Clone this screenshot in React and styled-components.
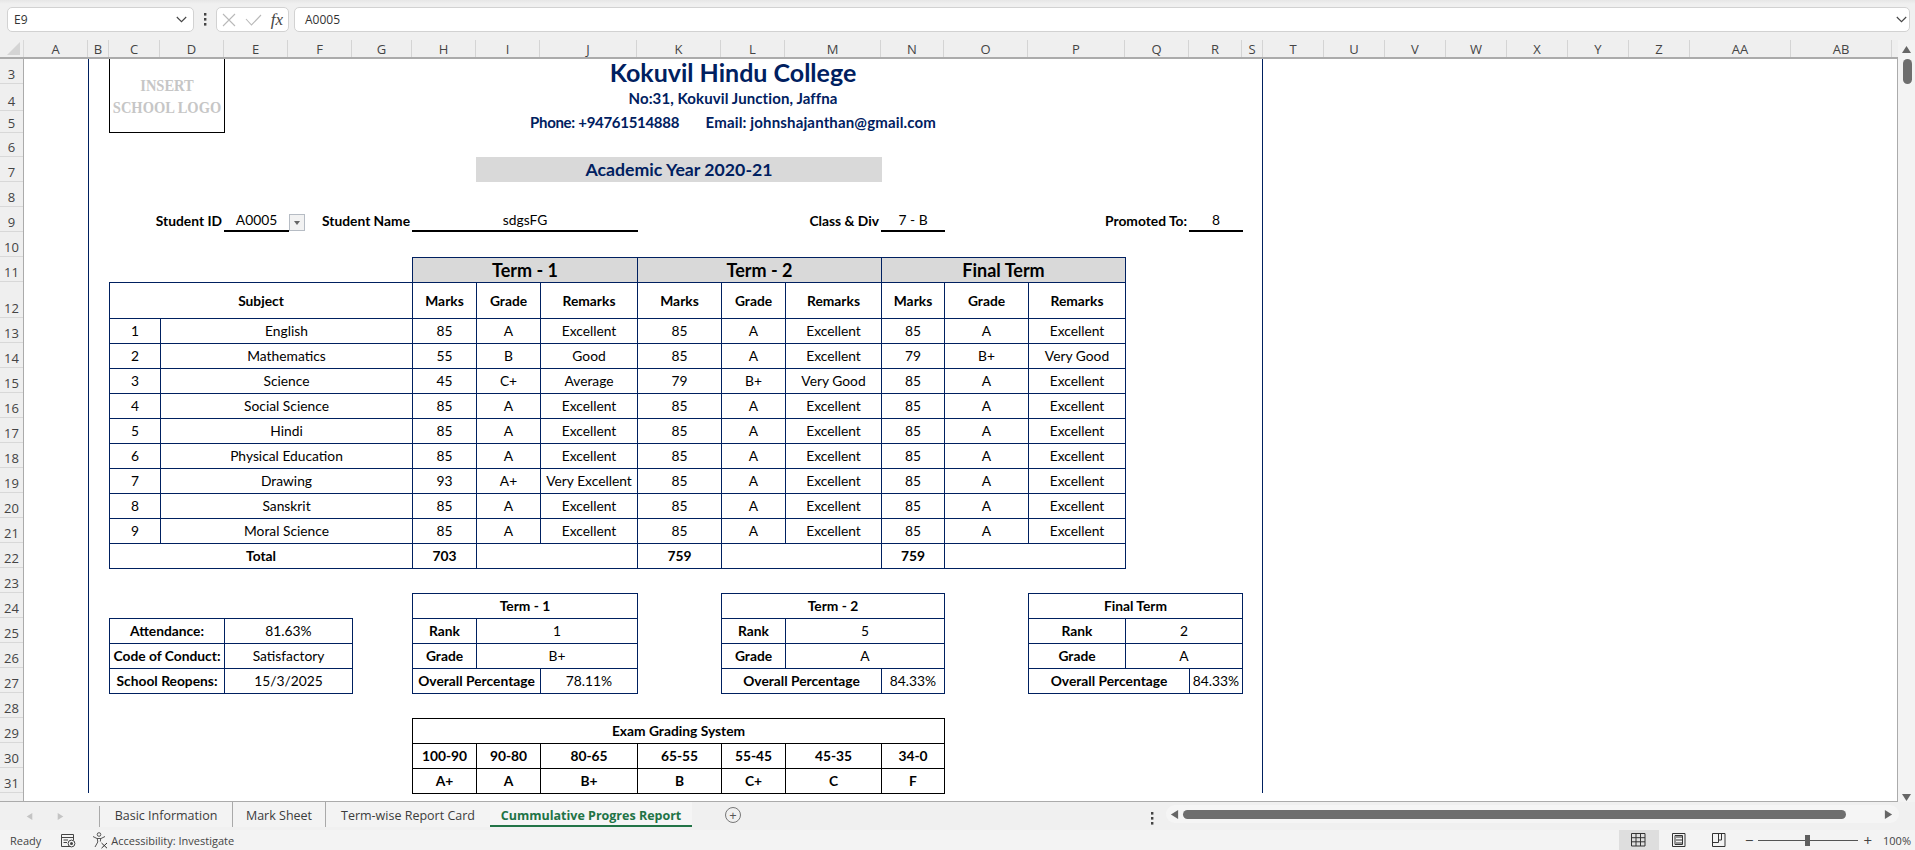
import React from 'react';
import styled, { createGlobalStyle } from 'styled-components';

const GlobalStyle = createGlobalStyle`
  html, body {
    margin: 0;
    padding: 0;
    background: #f0f0f0;
    overflow: hidden;
  }
`;

const UI_FONT = '"Open Sans", "Noto Sans", sans-serif';
const SHEET_FONT = 'Lato, "Liberation Sans", sans-serif';
const NAVY = '#002060';

const COLUMNS = [
  ['A', 64], ['B', 21], ['C', 51], ['D', 64], ['E', 64], ['F', 64], ['G', 60],
  ['H', 64], ['I', 64], ['J', 97], ['K', 84], ['L', 64], ['M', 96], ['N', 63],
  ['O', 84], ['P', 97], ['Q', 64], ['R', 53], ['S', 21], ['T', 61], ['U', 61],
  ['V', 61], ['W', 61], ['X', 61], ['Y', 61], ['Z', 61], ['AA', 101], ['AB', 101],
];

const ROWS = [
  [3, 25], [4, 27], [5, 22], [6, 24], [7, 25], [8, 25], [9, 25], [10, 25], [11, 25], [12, 36],
  ...Array.from({ length: 19 }, (_, i) => [13 + i, 25]),
];

const columnTracks = COLUMNS.map(([name, w]) => `[${name}] ${w}px`).join(' ') + ' [END] 5px';
const rowTracks = ROWS.map(([n, h]) => `[r${n}] ${h}px`).join(' ') + ' [r32] 8px';

const Page = styled.div`
  width: 1915px;
  height: 850px;
  display: flex;
  flex-direction: column;
  background: #f0f0f0;
  overflow: hidden;
  font-family: ${UI_FONT};
`;

/* formula bar */
const FormulaBar = styled.div`
  height: 40px;
  flex: none;
  display: flex;
  align-items: flex-start;
  padding: 7px 5px 0 7px;
  box-sizing: border-box;
  background: linear-gradient(#e6e6e6, #f0f0f0 4px);
`;

const InputBox = styled.div`
  height: 25px;
  box-sizing: border-box;
  background: #fff;
  border: 1px solid #d2d2d2;
  border-radius: 5px;
  display: flex;
  align-items: center;
  font-size: 12px;
  color: #333;
`;

const NameBox = styled(InputBox)`
  width: 187px;
  flex: none;
  justify-content: space-between;
  padding: 0 6px 0 6px;
`;

const BarDots = styled.div`
  width: 22px;
  flex: none;
  height: 25px;
  display: flex;
  align-items: center;
  justify-content: center;
`;

const FxBox = styled(InputBox)`
  width: 73px;
  flex: none;
  justify-content: space-between;
  padding: 0 5px 0 5px;
`;

const FxGlyph = styled.span`
  font-family: "Liberation Serif", serif;
  font-style: italic;
  font-size: 17px;
  color: #444;
`;

const FormulaInput = styled(InputBox)`
  flex: 1;
  margin-left: 5px;
  justify-content: space-between;
  padding: 0 2px 0 10px;
`;

/* sheet */
const SheetArea = styled.div`
  height: 762px;
  flex: none;
  display: flex;
`;

const SheetMain = styled.div`
  width: 1898px;
  flex: none;
  display: flex;
  flex-direction: column;
`;

const ColumnHeaders = styled.div`
  height: 19px;
  flex: none;
  display: flex;
  box-sizing: border-box;
  border-bottom: 2px solid #ababab;
  background: #efefef;
`;

const Corner = styled.div`
  width: 24px;
  flex: none;
  box-sizing: border-box;
  border-right: 1px solid #d8d8d8;
  display: flex;
  align-items: flex-end;
  justify-content: flex-end;
  padding: 0 3px 2px 0;
`;

const ColumnLabel = styled.div`
  width: ${(p) => p.$w}px;
  flex: none;
  box-sizing: border-box;
  border-right: 1px solid #d4d4d4;
  text-align: center;
  font-size: 13px;
  line-height: 19px;
  color: #444;
`;

const SheetBody = styled.div`
  flex: 1;
  display: flex;
  min-height: 0;
  border-bottom: 1px solid #ababab;
`;

const RowHeaders = styled.div`
  width: 24px;
  flex: none;
  box-sizing: border-box;
  border-right: 1px solid #ababab;
  background: #efefef;
  overflow: hidden;
`;

const RowLabel = styled.div`
  height: ${(p) => p.$h}px;
  box-sizing: border-box;
  border-bottom: 1px solid #d8d8d8;
  display: flex;
  align-items: flex-end;
  justify-content: center;
  font-size: 13px;
  line-height: 17px;
  color: #444;
`;

const Grid = styled.div`
  flex: 1;
  display: grid;
  grid-template-columns: ${columnTracks};
  grid-template-rows: ${rowTracks};
  background: #fff;
  box-sizing: border-box;
  border-right: 1px solid #ababab;
  font-family: ${SHEET_FONT};
  font-size: 13.8px;
  color: #000;
`;

const Place = styled.div`
  grid-column: ${(p) => p.$from} / ${(p) => p.$to || 'span 1'};
  grid-row: r${(p) => p.$row} / ${(p) => (p.$rowEnd ? `r${p.$rowEnd}` : 'span 1')};
  min-width: 0;
  display: flex;
  align-items: center;
  justify-content: center;
  white-space: pre;
`;

const FrameLine = styled(Place)`
  box-sizing: border-box;
  ${(p) => (p.$side === 'right' ? `border-right: 1px solid ${NAVY};` : `border-left: 1px solid ${NAVY};`)}
`;

const LogoBox = styled(Place)`
  flex-direction: column;
  box-sizing: border-box;
  margin: 0 -1px 0 0;
  border: 1px solid #000;
  border-top: none;
  font-family: "Liberation Serif", serif;
  font-weight: 700;
  font-size: 14.5px;
  line-height: 22px;
  color: #c6c6c6;
`;

const LogoLine = styled.span`
  display: block;
  transform: scaleY(1.2);
`;

const Heading = styled(Place)`
  color: ${NAVY};
  font-weight: 700;
  font-size: ${(p) => p.$size || 14}px;
  line-height: 20px;
  letter-spacing: ${(p) => p.$track || 0}px;
`;

const PhoneText = styled.span`
  letter-spacing: -0.3px;
`;

const YearBand = styled(Heading)`
  margin-right: -1px;
  background: #d9d9d9;
`;

const FieldLabel = styled(Place)`
  justify-content: flex-end;
  font-weight: 700;
  padding: 1px 2px 0 0;
`;

const FieldValue = styled(Place)`
  position: relative;
  box-sizing: border-box;
  margin-right: -1px;
  padding-top: 2px;
  border-bottom: 2px solid #000;
`;

const DropButton = styled.div`
  position: absolute;
  left: 100%;
  top: 7px;
  width: 16px;
  height: 17px;
  box-sizing: border-box;
  border: 1px solid #b6bcc4;
  background: #f2f2f2;
  display: flex;
  align-items: center;
  justify-content: center;
  &::after {
    content: '';
    border-left: 3.5px solid transparent;
    border-right: 3.5px solid transparent;
    border-top: 4px solid #666;
  }
`;

const Cell = styled(Place)`
  box-sizing: border-box;
  margin: 0 -1px -1px 0;
  padding-bottom: 1px;
  border: 1px solid ${(p) => (p.$black ? '#000' : NAVY)};
  font-weight: ${(p) => (p.$bold ? 700 : 400)};
  font-size: ${(p) => p.$size || 13.8}px;
  background: ${(p) => (p.$shade ? '#d9d9d9' : 'transparent')};
`;

const VScroll = styled.div`
  width: 17px;
  flex: none;
  display: flex;
  flex-direction: column;
  align-items: center;
  padding-top: 5px;
  box-sizing: border-box;
  background: #f3f3f3;
`;

const VThumb = styled.div`
  width: 9px;
  height: 25px;
  margin-top: 5px;
  margin-left: 1px;
  border-radius: 5px;
  background: #6e6e6e;
`;

const Spacer = styled.div`
  flex: 1;
`;

/* tabs */
const TabBar = styled.div`
  height: 28px;
  flex: none;
  display: flex;
  align-items: stretch;
  background: #f0f0f0;
`;

const TabNav = styled.div`
  width: 100px;
  flex: none;
  box-sizing: border-box;
  border-right: 1px solid #a9a9a9;
  margin: 4px 0 3px;
  display: flex;
  align-items: center;
  gap: 24px;
  padding-left: 26px;
`;

const Tab = styled.div`
  width: ${(p) => p.$w}px;
  flex: none;
  box-sizing: border-box;
  display: flex;
  align-items: center;
  justify-content: center;
  padding-top: ${(p) => (p.$active ? '3px' : '1px')};
  font-size: 12.5px;
  color: ${(p) => (p.$active ? '#217346' : '#3c3c3c')};
  font-weight: ${(p) => (p.$active ? 700 : 400)};
  background: ${(p) => (p.$active ? '#f5f5f5' : '#f3f3f3')};
  margin-bottom: 3px;
  border-right: ${(p) => (p.$sep ? '1px solid #a9a9a9' : 'none')};
  border-bottom: ${(p) => (p.$active ? '2px solid #217346' : 'none')};
`;

const AddTab = styled.div`
  width: 16px;
  height: 16px;
  flex: none;
  margin: 5px 0 0 33px;
  box-sizing: border-box;
  border: 1px solid #777;
  border-radius: 50%;
  display: flex;
  align-items: center;
  justify-content: center;
  font-size: 13px;
  line-height: 1;
  color: #555;
`;

const TabDots = styled.div`
  margin: 6px 0 0 410px;
  width: 15px;
  flex: none;
`;

const HScroll = styled.div`
  width: 733px;
  height: 18px;
  margin-top: 3px;
  flex: none;
  display: flex;
  align-items: center;
  gap: 4px;
  padding: 0 6px 0 4px;
  box-sizing: border-box;
  border-radius: 9px;
  background: #f5f5f5;
`;

const HThumb = styled.div`
  flex: 1;
  height: 9px;
  margin-right: 34px;
  border-radius: 5px;
  background: #6e6e6e;
`;

/* status bar */
const StatusBar = styled.div`
  height: 20px;
  flex: none;
  display: flex;
  align-items: center;
  background: #f3f3f3;
  font-size: 11px;
  color: #444;
`;

const StatusLeft = styled.div`
  display: flex;
  align-items: center;
  padding-left: 10px;
`;

const Gap = styled.span`
  width: ${(p) => p.$w}px;
  flex: none;
`;

const StatusRight = styled.div`
  margin-left: auto;
  display: flex;
  align-items: center;
  height: 100%;
`;

const ViewButton = styled.div`
  width: 40px;
  height: 100%;
  display: flex;
  align-items: center;
  justify-content: center;
  background: ${(p) => (p.$on ? '#dedede' : 'transparent')};
`;

const ZoomTrack = styled.div`
  position: relative;
  width: 100px;
  height: 1px;
  margin: 0 5px;
  background: #555;
`;

const ZoomThumb = styled.div`
  position: absolute;
  left: 47px;
  top: -5px;
  width: 5px;
  height: 11px;
  background: #5f5f5f;
`;

const ZoomSign = styled.span`
  font-size: 15px;
  color: #444;
  line-height: 1;
`;

const Percent = styled.span`
  margin: 0 4px 0 11px;
`;

const Chevron = () => (
  <svg width="11" height="7" viewBox="0 0 11 7" fill="none" stroke="#444" strokeWidth="1.1">
    <path d="M.8 1 5.5 5.7 10.2 1" />
  </svg>
);

const Dots = ({ color = '#444' }) => (
  <svg width="3" height="13" viewBox="0 0 3 13" fill={color}>
    <rect y="0" width="2.4" height="2.6" />
    <rect y="5" width="2.4" height="2.6" />
    <rect y="10" width="2.4" height="2.6" />
  </svg>
);

const Triangle = ({ dir, color, size = 8 }) => {
  const points = {
    up: '5,1 10,9 0,9',
    down: '0,1 10,1 5,9',
    left: '9,0 9,10 1,5',
    right: '1,0 1,10 9,5',
  }[dir];
  return (
    <svg width={size} height={size} viewBox="0 0 10 10" fill={color}>
      <polygon points={points} />
    </svg>
  );
};

const MacroIcon = () => (
  <svg width="16" height="15" viewBox="0 0 16 15" fill="none" stroke="#444" strokeWidth="1">
    <path d="M10.5 13.5H1.5V1.5H13.5V7" />
    <path d="M1.5 4.5H13.5M3.5 7H8M3.5 9.5H7" />
    <circle cx="11.5" cy="10.5" r="3.4" />
    <circle cx="11.5" cy="10.5" r="1.5" fill="#444" stroke="none" />
  </svg>
);

const AccessibilityIcon = () => (
  <svg width="17" height="17" viewBox="0 0 17 17" fill="none" stroke="#555" strokeWidth="1">
    <circle cx="7" cy="2.5" r="1.8" />
    <path d="M1 4.5 5 6.5H9L13 4.5M5.3 6.5 5.8 10 3 15M8.7 6.5 8.3 9.5" />
    <path d="M9.5 11 15 16.2M15 11 9.5 16.2" stroke="#333" />
  </svg>
);

const CloseIcon = () => (
  <svg width="14" height="14" viewBox="0 0 14 14" fill="none" stroke="#b9b9b9" strokeWidth="1.1">
    <path d="M1 1 13 13M13 1 1 13" />
  </svg>
);

const CheckIcon = () => (
  <svg width="17" height="12" viewBox="0 0 17 12" fill="none" stroke="#b9b9b9" strokeWidth="1.1">
    <path d="M1 5 6.5 11 16 1" />
  </svg>
);

const GridViewIcon = () => (
  <svg width="15" height="14" viewBox="0 0 15 14" fill="none" stroke="#333">
    <path d="M.5.5h13.5v12.5H.5zM5 .5v12.5M9.5.5v12.5M.5 4.7h13.5M.5 8.8h13.5" />
  </svg>
);

const PageViewIcon = () => (
  <svg width="14" height="14" viewBox="0 0 14 14" fill="none" stroke="#333">
    <path d="M.5.5h12.5v13H.5zM4 4h6M4 7h6M4 10h6M3 2.5h7.5v9H3z" />
  </svg>
);

const BreakViewIcon = () => (
  <svg width="14" height="14" viewBox="0 0 14 14" fill="none" stroke="#333">
    <path d="M.5.5h12.5v13H.5zM.5 9.5H6.5V.5M6.5 7H9.5V.5" />
  </svg>
);

const HEADER_COLS = [['H', 'I', 'J'], ['K', 'L', 'M'], ['N', 'O', 'P']];

const MARKS = [
  ['English', [['85', 'A', 'Excellent'], ['85', 'A', 'Excellent'], ['85', 'A', 'Excellent']]],
  ['Mathematics', [['55', 'B', 'Good'], ['85', 'A', 'Excellent'], ['79', 'B+', 'Very Good']]],
  ['Science', [['45', 'C+', 'Average'], ['79', 'B+', 'Very Good'], ['85', 'A', 'Excellent']]],
  ['Social Science', [['85', 'A', 'Excellent'], ['85', 'A', 'Excellent'], ['85', 'A', 'Excellent']]],
  ['Hindi', [['85', 'A', 'Excellent'], ['85', 'A', 'Excellent'], ['85', 'A', 'Excellent']]],
  ['Physical Education', [['85', 'A', 'Excellent'], ['85', 'A', 'Excellent'], ['85', 'A', 'Excellent']]],
  ['Drawing', [['93', 'A+', 'Very Excellent'], ['85', 'A', 'Excellent'], ['85', 'A', 'Excellent']]],
  ['Sanskrit', [['85', 'A', 'Excellent'], ['85', 'A', 'Excellent'], ['85', 'A', 'Excellent']]],
  ['Moral Science', [['85', 'A', 'Excellent'], ['85', 'A', 'Excellent'], ['85', 'A', 'Excellent']]],
];

const TERM_BOXES = [
  { title: 'Term - 1', cols: ['H', 'I', 'J', 'K'], rank: '1', grade: 'B+', pct: '78.11%' },
  { title: 'Term - 2', cols: ['L', 'M', 'N', 'O'], rank: '5', grade: 'A', pct: '84.33%' },
  { title: 'Final Term', cols: ['P', 'Q', 'R', 'S'], rank: '2', grade: 'A', pct: '84.33%' },
];

const GRADING = [
  ['H', 'I', '100-90', 'A+'], ['I', 'J', '90-80', 'A'], ['J', 'K', '80-65', 'B+'], ['K', 'L', '65-55', 'B'],
  ['L', 'M', '55-45', 'C+'], ['M', 'N', '45-35', 'C'], ['N', 'O', '34-0', 'F'],
];

const SUMMARY = [
  ['Attendance:', '81.63%'],
  ['Code of Conduct:', 'Satisfactory'],
  ['School Reopens:', '15/3/2025'],
];

const nextColumn = (c) => COLUMNS[COLUMNS.findIndex(([n]) => n === c) + 1][0];

const ReportCard = () => (
  <Grid>
    <FrameLine $from="B" $row={3} $rowEnd={32} $side="left" />
    <FrameLine $from="S" $row={3} $rowEnd={32} $side="right" />

    <LogoBox $from="C" $to="E" $row={3} $rowEnd={6}>
      <LogoLine>INSERT</LogoLine>
      <LogoLine>SCHOOL LOGO</LogoLine>
    </LogoBox>
    <Heading $from="E" $to="S" $row={3} $size={25}>Kokuvil Hindu College</Heading>
    <Heading $from="E" $to="S" $row={4} $size={15} $track={0.1}>No:31, Kokuvil Junction, Jaffna</Heading>
    <Heading $from="E" $to="S" $row={5} $size={15} $track={0.15}>
      <PhoneText>Phone: +94761514888</PhoneText>{'       Email: johnshajanthan@gmail.com'}
    </Heading>
    <YearBand $from="I" $to="N" $row={7} $size={17.7}>Academic Year 2020-21</YearBand>

    <FieldLabel $from="C" $to="E" $row={9}>Student ID</FieldLabel>
    <FieldValue $from="E" $row={9}>A0005<DropButton /></FieldValue>
    <FieldLabel $from="F" $to="H" $row={9}>Student Name</FieldLabel>
    <FieldValue $from="H" $to="K" $row={9}>sdgsFG</FieldValue>
    <FieldLabel $from="K" $to="N" $row={9}>{'Class & Div'}</FieldLabel>
    <FieldValue $from="N" $row={9}>7 - B</FieldValue>
    <FieldLabel $from="O" $to="R" $row={9}>Promoted To:</FieldLabel>
    <FieldValue $from="R" $row={9}>8</FieldValue>

    <Cell $from="H" $to="K" $row={11} $shade $bold $size={18}>Term - 1</Cell>
    <Cell $from="K" $to="N" $row={11} $shade $bold $size={18}>Term - 2</Cell>
    <Cell $from="N" $to="Q" $row={11} $shade $bold $size={18}>Final Term</Cell>

    <Cell $from="C" $to="H" $row={12} $bold>Subject</Cell>
    {HEADER_COLS.map(([m, g, r]) => (
      <React.Fragment key={m}>
        <Cell $from={m} $row={12} $bold>Marks</Cell>
        <Cell $from={g} $row={12} $bold>Grade</Cell>
        <Cell $from={r} $row={12} $bold>Remarks</Cell>
      </React.Fragment>
    ))}

    {MARKS.map(([subject, terms], i) => (
      <React.Fragment key={subject}>
        <Cell $from="C" $row={13 + i}>{i + 1}</Cell>
        <Cell $from="D" $to="H" $row={13 + i}>{subject}</Cell>
        {terms.map((term, t) => term.map((value, v) => (
          <Cell key={`${t}-${v}`} $from={HEADER_COLS[t][v]} $row={13 + i}>{value}</Cell>
        )))}
      </React.Fragment>
    ))}

    <Cell $from="C" $to="H" $row={22} $bold>Total</Cell>
    <Cell $from="H" $row={22} $bold>703</Cell>
    <Cell $from="I" $to="K" $row={22} />
    <Cell $from="K" $row={22} $bold>759</Cell>
    <Cell $from="L" $to="N" $row={22} />
    <Cell $from="N" $row={22} $bold>759</Cell>
    <Cell $from="O" $to="Q" $row={22} />

    {SUMMARY.map(([label, value], i) => (
      <React.Fragment key={label}>
        <Cell $from="C" $to="E" $row={25 + i} $bold>{label}</Cell>
        <Cell $from="E" $to="G" $row={25 + i}>{value}</Cell>
      </React.Fragment>
    ))}

    {TERM_BOXES.map(({ title, cols: [a, b, c, end], rank, grade, pct }) => (
      <React.Fragment key={title}>
        <Cell $from={a} $to={end} $row={24} $bold>{title}</Cell>
        <Cell $from={a} $row={25} $bold>Rank</Cell>
        <Cell $from={b} $to={end} $row={25}>{rank}</Cell>
        <Cell $from={a} $row={26} $bold>Grade</Cell>
        <Cell $from={b} $to={end} $row={26}>{grade}</Cell>
        <Cell $from={a} $to={c} $row={27} $bold>Overall Percentage</Cell>
        <Cell $from={c} $to={nextColumn(c)} $row={27}>{pct}</Cell>
      </React.Fragment>
    ))}

    <Cell $black $from="H" $to="O" $row={29} $bold>Exam Grading System</Cell>
    {GRADING.map(([from, to, range, grade]) => (
      <React.Fragment key={range}>
        <Cell $black $from={from} $to={to} $row={30} $bold>{range}</Cell>
        <Cell $black $from={from} $to={to} $row={31} $bold>{grade}</Cell>
      </React.Fragment>
    ))}
  </Grid>
);

const App = () => (
  <Page>
    <GlobalStyle />
    <FormulaBar>
      <NameBox>E9<Chevron /></NameBox>
      <BarDots><Dots /></BarDots>
      <FxBox><CloseIcon /><CheckIcon /><FxGlyph>fx</FxGlyph></FxBox>
      <FormulaInput>A0005<Chevron /></FormulaInput>
    </FormulaBar>

    <SheetArea>
      <SheetMain>
        <ColumnHeaders>
          <Corner>
            <svg width="13" height="13" viewBox="0 0 13 13"><polygon points="13,0 13,13 0,13" fill="#d4d4d4" /></svg>
          </Corner>
          {COLUMNS.map(([name, w]) => <ColumnLabel key={name} $w={w}>{name}</ColumnLabel>)}
        </ColumnHeaders>
        <SheetBody>
          <RowHeaders>
            {ROWS.map(([n, h]) => <RowLabel key={n} $h={h}>{n}</RowLabel>)}
          </RowHeaders>
          <ReportCard />
        </SheetBody>
      </SheetMain>
      <VScroll>
        <Triangle dir="up" color="#666" size={9} />
        <VThumb />
        <Spacer />
        <Triangle dir="down" color="#666" size={9} />
      </VScroll>
    </SheetArea>

    <TabBar>
      <TabNav>
        <Triangle dir="left" color="#c4c4c4" size={7} />
        <Triangle dir="right" color="#c4c4c4" size={7} />
      </TabNav>
      <Tab $w={133} $sep>Basic Information</Tab>
      <Tab $w={93} $sep>Mark Sheet</Tab>
      <Tab $w={164}>Term-wise Report Card</Tab>
      <Tab $w={202} $active>Cummulative Progres Report</Tab>
      <AddTab>+</AddTab>
      <TabDots><Dots color="#444" /></TabDots>
      <HScroll>
        <Triangle dir="left" color="#666" size={9} />
        <HThumb />
        <Triangle dir="right" color="#666" size={9} />
      </HScroll>
    </TabBar>

    <StatusBar>
      <StatusLeft>
        Ready
        <Gap $w={19} />
        <MacroIcon />
        <Gap $w={16} />
        <AccessibilityIcon />
        <Gap $w={2} />
        Accessibility: Investigate
      </StatusLeft>
      <StatusRight>
        <ViewButton $on><GridViewIcon /></ViewButton>
        <ViewButton><PageViewIcon /></ViewButton>
        <ViewButton><BreakViewIcon /></ViewButton>
        <Gap $w={6} />
        <ZoomSign>−</ZoomSign>
        <ZoomTrack><ZoomThumb /></ZoomTrack>
        <ZoomSign>+</ZoomSign>
        <Percent>100%</Percent>
      </StatusRight>
    </StatusBar>
  </Page>
);

export default App;
